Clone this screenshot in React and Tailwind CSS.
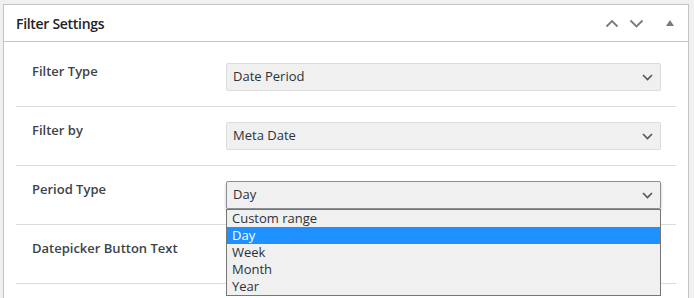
import React from "react";

const font = { fontFamily: '"Open Sans", "Noto Sans", sans-serif' };

function Chevron() {
  return (
    <svg width="11" height="7" viewBox="0 0 11 7" className="shrink-0">
      <path d="M1 1 L5.5 5.5 L10 1" fill="none" stroke="#50575e" strokeWidth="1.6" />
    </svg>
  );
}

function Select({ value, open }) {
  return (
    <div className="relative w-[435px]">
      <div
        className={
          "h-[28px] flex items-center justify-between pl-[6px] pr-[7px] bg-[#f0f0f0] text-[13px] text-[#2c3338] border rounded-[2px] " +
          (open ? "border-[#8c8f94] shadow-[0_2px_3px_rgba(0,0,0,0.25)]" : "border-[#dcdcde]")
        }
      >
        <span>{value}</span>
        <Chevron />
      </div>
      {open && (
        <div className="absolute left-0 top-full w-full bg-[#f0f0f0] border border-[#767676] text-[13px] leading-[17px] text-[#2c3338] z-10">
          {["Custom range", "Day", "Week", "Month", "Year"].map((o) => (
            <div
              key={o}
              className={"h-[17px] pl-[5px] " + (o === "Day" ? "bg-[#1e90ff] text-white" : "")}
            >
              {o}
            </div>
          ))}
        </div>
      )}
    </div>
  );
}

function Row({ label, value, open, last }) {
  return (
    <div className={"flex items-start pt-[15px] pb-[15px] " + (last ? "" : "border-b border-[#dcdcde]")}>
      <div className="w-[210px] pl-[16px] text-[13px] leading-[16px] font-semibold text-[#3c434a]">
        {label}
      </div>
      {value ? <Select value={value} open={open} /> : <div className="h-[28px]" />}
    </div>
  );
}

export default function App() {
  return (
    <div className="w-[694px] h-[298px] bg-[#f0f0f1] pt-[4px] pl-[3px] overflow-hidden" style={font}>
      <div className="w-[686px] h-[320px] border border-[#c3c4c7] bg-white">
        <div className="h-[37px] border-b border-[#c3c4c7] flex items-center pl-[12px] pr-[14px]">
          <div className="text-[14px] tracking-[-0.3px] font-semibold text-[#1d2327] flex-1 pt-[1px]">Filter Settings</div>
          <div className="flex items-center">
            <svg width="14" height="9" viewBox="0 0 14 9" className="mr-[10px]">
              <path d="M1.5 7.5 L7 2 L12.5 7.5" fill="none" stroke="#787c82" strokeWidth="1.8" />
            </svg>
            <svg width="15" height="9" viewBox="0 0 15 9" className="mr-[22px]">
              <path d="M1.5 1.5 L7.5 7.5 L13.5 1.5" fill="none" stroke="#787c82" strokeWidth="1.8" />
            </svg>
            <svg width="8" height="6" viewBox="0 0 8 6">
              <path d="M0 6 L4 0 L8 6 Z" fill="#787c82" />
            </svg>
          </div>
        </div>
        <div className="pt-[6px] px-[12px]">
          <Row label="Filter Type" value="Date Period" />
          <Row label="Filter by" value="Meta Date" />
          <Row label="Period Type" value="Day" open />
          <Row label="Datepicker Button Text" />
        </div>
      </div>
    </div>
  );
}
